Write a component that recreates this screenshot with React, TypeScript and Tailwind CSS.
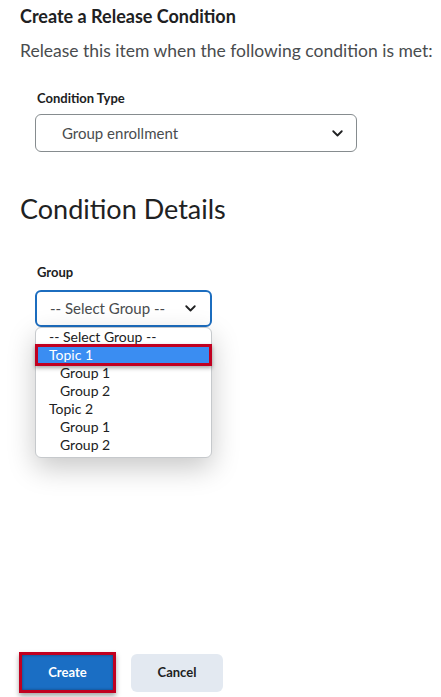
import React from 'react'

const font = { fontFamily: 'Lato, "Open Sans", sans-serif' }

function Chevron() {
  return (
    <svg width="11" height="7" viewBox="0 0 11 7" className="shrink-0">
      <path d="M1.25 1.25 L5.5 5.5 L9.75 1.25" fill="none" stroke="#202122" strokeWidth="1.8" strokeLinecap="round" strokeLinejoin="round" />
    </svg>
  )
}

const options = [
  { label: '-- Select Group --', indent: false },
  { label: 'Topic 1', indent: false, active: true },
  { label: 'Group 1', indent: true },
  { label: 'Group 2', indent: true },
  { label: 'Topic 2', indent: false },
  { label: 'Group 1', indent: true },
  { label: 'Group 2', indent: true },
]

export default function App() {
  return (
    <div className="flex h-[697px] flex-col overflow-hidden bg-white pl-[20px] text-[#202122]" style={font}>
      <h1 className="mt-[4px] text-[18px] font-bold leading-6">Create a Release Condition</h1>
      <p className="mt-[11px] whitespace-nowrap text-[17.5px] leading-6 text-[#494c4e]">
        Release this item when the following condition is met:
      </p>

      <div className="ml-[17px] mt-[27px] text-[13px] font-bold leading-4">Condition Type</div>
      <div className="ml-[15px] mt-[8px] flex h-[38px] w-[322px] items-center justify-between rounded-[6px] border border-[#868c8f] pl-[26px] pr-[13px]">
        <span className="text-[15px] text-[#494c4e]">Group enrollment</span>
        <Chevron />
      </div>

      <h2 className="mt-[41px] text-[27px] font-normal leading-8">Condition Details</h2>

      <div className="ml-[17px] mt-[39px] text-[13px] font-bold leading-4">Group</div>
      <div className="ml-[15px] mt-[10px] flex h-[37px] w-[177px] items-center justify-between rounded-[6px] border-2 border-[#1c6dbf] pl-[13px] pr-[14px]">
        <span className="text-[15px] text-[#494c4e]">-- Select Group --</span>
        <Chevron />
      </div>

      <div className="ml-[15px] w-[177px] rounded-[6px] border border-[#c6c9cc] bg-white pb-[3px] shadow-[0_10px_28px_rgba(0,0,0,0.22)]">
        {options.map((o, i) =>
          o.active ? (
            <div key={i} className="relative h-[18px] text-[14px] leading-[18px]">
              <div className="absolute -inset-x-[1px] -inset-y-[2px] flex items-center border-[3px] border-[#c10020] bg-[#3a8df2] pl-[11px] text-white shadow-[0_2px_4px_rgba(0,0,0,0.35)]">
                {o.label}
              </div>
            </div>
          ) : (
            <div
              key={i}
              className={`h-[18px] text-[14px] leading-[18px] text-[#202122] ${o.indent ? 'pl-[24px]' : 'pl-[13px]'}`}
            >
              {o.label}
            </div>
          ),
        )}
      </div>

      <div className="mt-auto mb-[4px] flex items-center gap-[15px]">
        <div className="-ml-[1px] border-[3px] border-[#c10020] shadow-[0_3px_5px_rgba(0,0,0,0.35)]">
          <button className="flex h-[35px] w-[91px] items-center justify-center bg-[#1a6ec4] text-[13px] font-bold text-white shadow-[inset_0_0_3px_rgba(0,0,0,0.4)]">
            Create
          </button>
        </div>
        <button className="flex h-[38px] w-[92px] items-center justify-center rounded-[6px] bg-[#e3e9f1] text-[13px] font-bold text-[#202122]">
          Cancel
        </button>
      </div>
    </div>
  )
}
